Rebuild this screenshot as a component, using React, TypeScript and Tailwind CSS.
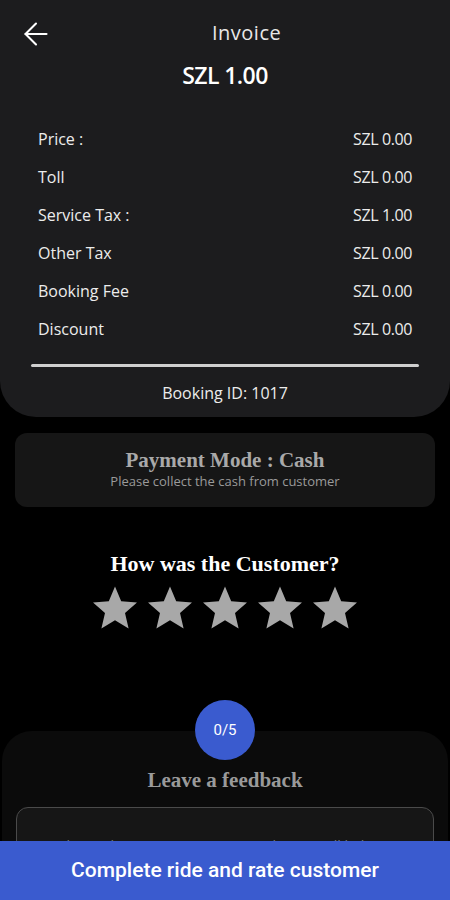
import { ArrowLeft } from "lucide-react";

const rows = [
	{ label: "Price :", value: "SZL 0.00" },
	{ label: "Toll", value: "SZL 0.00" },
	{ label: "Service Tax :", value: "SZL 1.00" },
	{ label: "Other Tax", value: "SZL 0.00" },
	{ label: "Booking Fee", value: "SZL 0.00" },
	{ label: "Discount", value: "SZL 0.00" },
];

const Star = () => (
	<svg width="48" height="46" viewBox="0 0 24 23">
		<path
			d="M12 0.8l3.1 7.3 7.9 0.7-6 5.2 1.8 7.7L12 17.6l-6.8 4.1L7 14l-6-5.2 7.9-0.7z"
			fill="#a8a8a8"
		/>
	</svg>
);

export default function App() {
	return (
		<div className="flex flex-col h-[900px] w-[450px] overflow-hidden bg-black text-white font-['Open_Sans',sans-serif]">
			<div className="h-[841px] overflow-hidden">
				{/* invoice card */}
				<div className="bg-[#1c1c1e] rounded-b-[36px] pt-[18px] pb-[12px]">
					<div className="relative h-[30px]">
						<ArrowLeft
							className="absolute left-[18px] -top-[2px]"
							size={36}
							strokeWidth={1.4}
						/>
						<h1 className="absolute left-[212px] top-0 text-[20px] leading-[30px] text-[#e8e8e8] tracking-wide">
							Invoice
						</h1>
					</div>
					<div className="text-center text-[23px] font-semibold mt-[12px] leading-[30px] tracking-tight">
						SZL 1.00
					</div>
					<div className="mt-[37px] px-[38px] flex flex-col gap-[14px]">
						{rows.map((r) => (
							<div
								key={r.label}
								className="flex justify-between items-center h-[24px] text-[16px] text-[#ececec]">
								<span>{r.label}</span>
								<span className="tracking-tight">{r.value}</span>
							</div>
						))}
					</div>
					<div className="mx-[31px] mt-[23px] h-[3px] rounded bg-[#cfcfcf]" />
					<div className="text-center text-[16px] text-[#ececec] mt-[14px] leading-[24px]">
						Booking ID: 1017
					</div>
				</div>

				{/* payment mode */}
				<div className="mx-[15px] mt-[16px] h-[74px] rounded-[12px] bg-[#161616] flex flex-col items-center pt-[15px]">
					<div className="font-['Liberation_Serif',serif] text-[21px] text-[#a9a9a9] font-bold leading-[24px]">
						Payment Mode : Cash
					</div>
					<div className="text-[13px] text-[#9a9a9a] leading-[18px]">
						Please collect the cash from customer
					</div>
				</div>

				{/* rating */}
				<div className="mt-[44px] text-center font-['Liberation_Serif',serif] font-bold text-[22px] leading-[26px]">
					How was the Customer?
				</div>
				<div className="mt-[8px] flex justify-center gap-[7px]">
					<Star />
					<Star />
					<Star />
					<Star />
					<Star />
				</div>

				{/* feedback */}
				<div className="relative mt-[100px] mx-[2px] rounded-t-[30px] bg-[#0b0b0b] pt-[35px] h-[300px]">
					<div className="absolute left-1/2 -top-[31px] -translate-x-1/2 w-[60px] h-[60px] rounded-full bg-[#3a5bcf] flex items-center justify-center text-[15px] font-['Roboto',sans-serif]">
						0/5
					</div>
					<div className="text-center font-['Liberation_Serif',serif] font-bold text-[21px] text-[#9a9a9a] leading-[28px]">
						Leave a feedback
					</div>
					<div className="mx-[14px] mt-[13px] h-[120px] rounded-[12px] border border-[#4a4a4a] bg-[#161616] px-[22px] pt-[27px] text-[14px] leading-[22px] text-[#7a7a7a] text-center">
						Please share your experience with us, it will help us improve our service
					</div>
				</div>
			</div>

			{/* bottom button */}
			<button className="w-full h-[59px] shrink-0 bg-[#3a5bcf] text-white text-[21px] font-medium font-['Roboto',sans-serif]">
				Complete ride and rate customer
			</button>
		</div>
	);
}
